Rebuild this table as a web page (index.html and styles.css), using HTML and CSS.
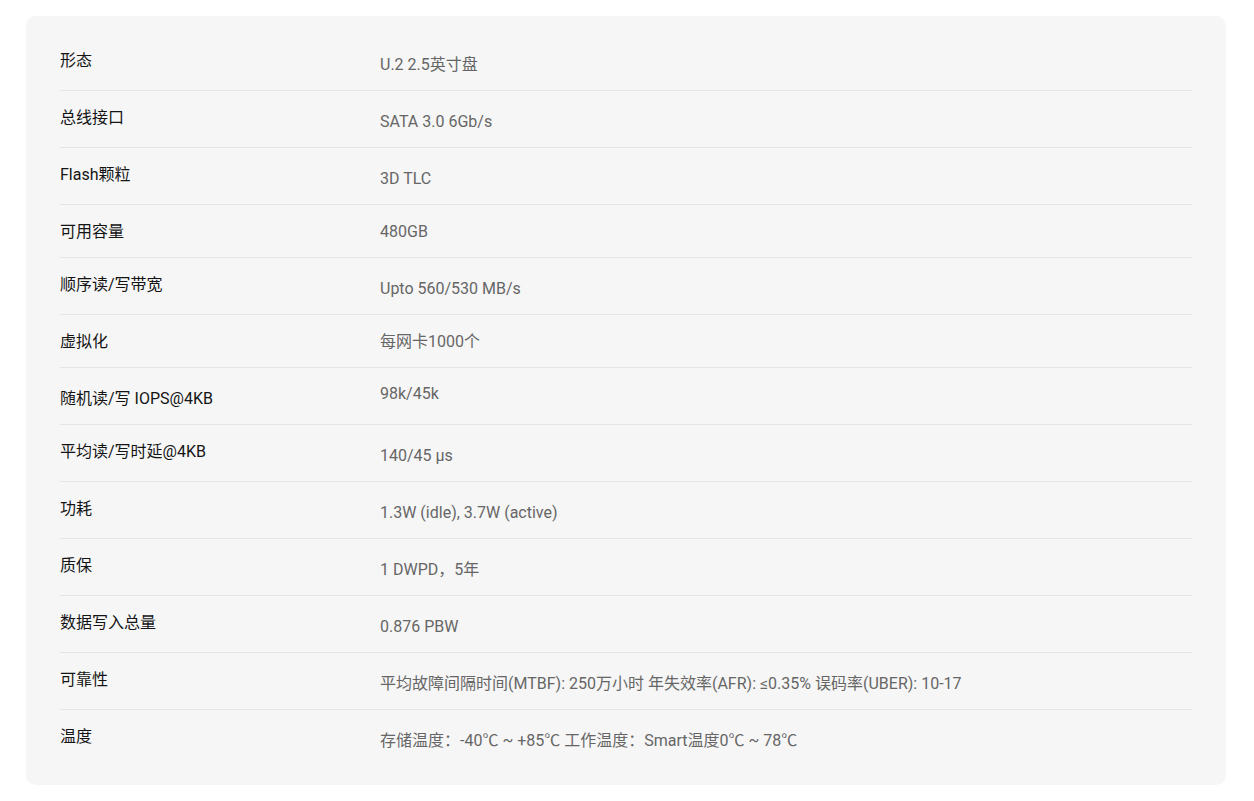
FILE: index.html
```html
<!DOCTYPE html>
<html lang="zh-CN">
<head>
  <meta charset="UTF-8">
  <meta name="viewport" content="width=device-width, initial-scale=1.0">
  <title>产品规格</title>
  <link rel="stylesheet" href="styles.css">
</head>
<body>
  <div class="spec-card">
    <div class="spec-row">
      <div class="spec-label">形态</div>
      <div class="spec-value">U.2 2.5英寸盘</div>
    </div>
    <div class="spec-row">
      <div class="spec-label">总线接口</div>
      <div class="spec-value">SATA 3.0 6Gb/s</div>
    </div>
    <div class="spec-row">
      <div class="spec-label">Flash颗粒</div>
      <div class="spec-value">3D TLC</div>
    </div>
    <div class="spec-row">
      <div class="spec-label">可用容量</div>
      <div class="spec-value flush">480GB</div>
    </div>
    <div class="spec-row">
      <div class="spec-label">顺序读/写带宽</div>
      <div class="spec-value">Upto 560/530 MB/s</div>
    </div>
    <div class="spec-row">
      <div class="spec-label">虚拟化</div>
      <div class="spec-value flush">每网卡1000个</div>
    </div>
    <div class="spec-row">
      <div class="spec-label low">随机读/写 IOPS@4KB</div>
      <div class="spec-value raised">98k/45k</div>
    </div>
    <div class="spec-row">
      <div class="spec-label">平均读/写时延@4KB</div>
      <div class="spec-value">140/45 µs</div>
    </div>
    <div class="spec-row">
      <div class="spec-label">功耗</div>
      <div class="spec-value">1.3W (idle), 3.7W (active)</div>
    </div>
    <div class="spec-row">
      <div class="spec-label">质保</div>
      <div class="spec-value">1 DWPD，5年</div>
    </div>
    <div class="spec-row">
      <div class="spec-label">数据写入总量</div>
      <div class="spec-value">0.876 PBW</div>
    </div>
    <div class="spec-row">
      <div class="spec-label">可靠性</div>
      <div class="spec-value">平均故障间隔时间(MTBF): 250万小时 年失效率(AFR): ≤0.35% 误码率(UBER): 10-17</div>
    </div>
    <div class="spec-row">
      <div class="spec-label">温度</div>
      <div class="spec-value">存储温度：-40℃ ~ +85℃ 工作温度：Smart温度0℃ ~ 78℃</div>
    </div>
  </div>
</body>
</html>
```

FILE: styles.css
```css
body {
  margin: 0;
  padding: 16px 28px 17px 26px;
  background-color: #fff;
  font-family: Roboto, "Noto Sans CJK SC", sans-serif;
}
.spec-card {
  background-color: #f6f6f6;
  border-radius: 10px;
  padding: 18px 34px 18px;
}
.spec-row {
  display: flex;
  align-items: flex-start;
  padding: 16px 0 14px;
  border-bottom: 1px solid #e6e6e6;
}
.spec-row:last-child {
  border-bottom: none;
  padding-bottom: 15px;
}
.spec-label {
  width: 320px;
  flex-shrink: 0;
  font-size: 16px;
  line-height: 22px;
  color: #141414;
}
.spec-label.low {
  margin-top: 4px;
}
.spec-value {
  margin-top: 4px;
  font-size: 16px;
  line-height: 22px;
  color: #666;
}
.spec-value.flush {
  margin-top: 0;
}
.spec-value.raised {
  margin-top: -1px;
}
```
